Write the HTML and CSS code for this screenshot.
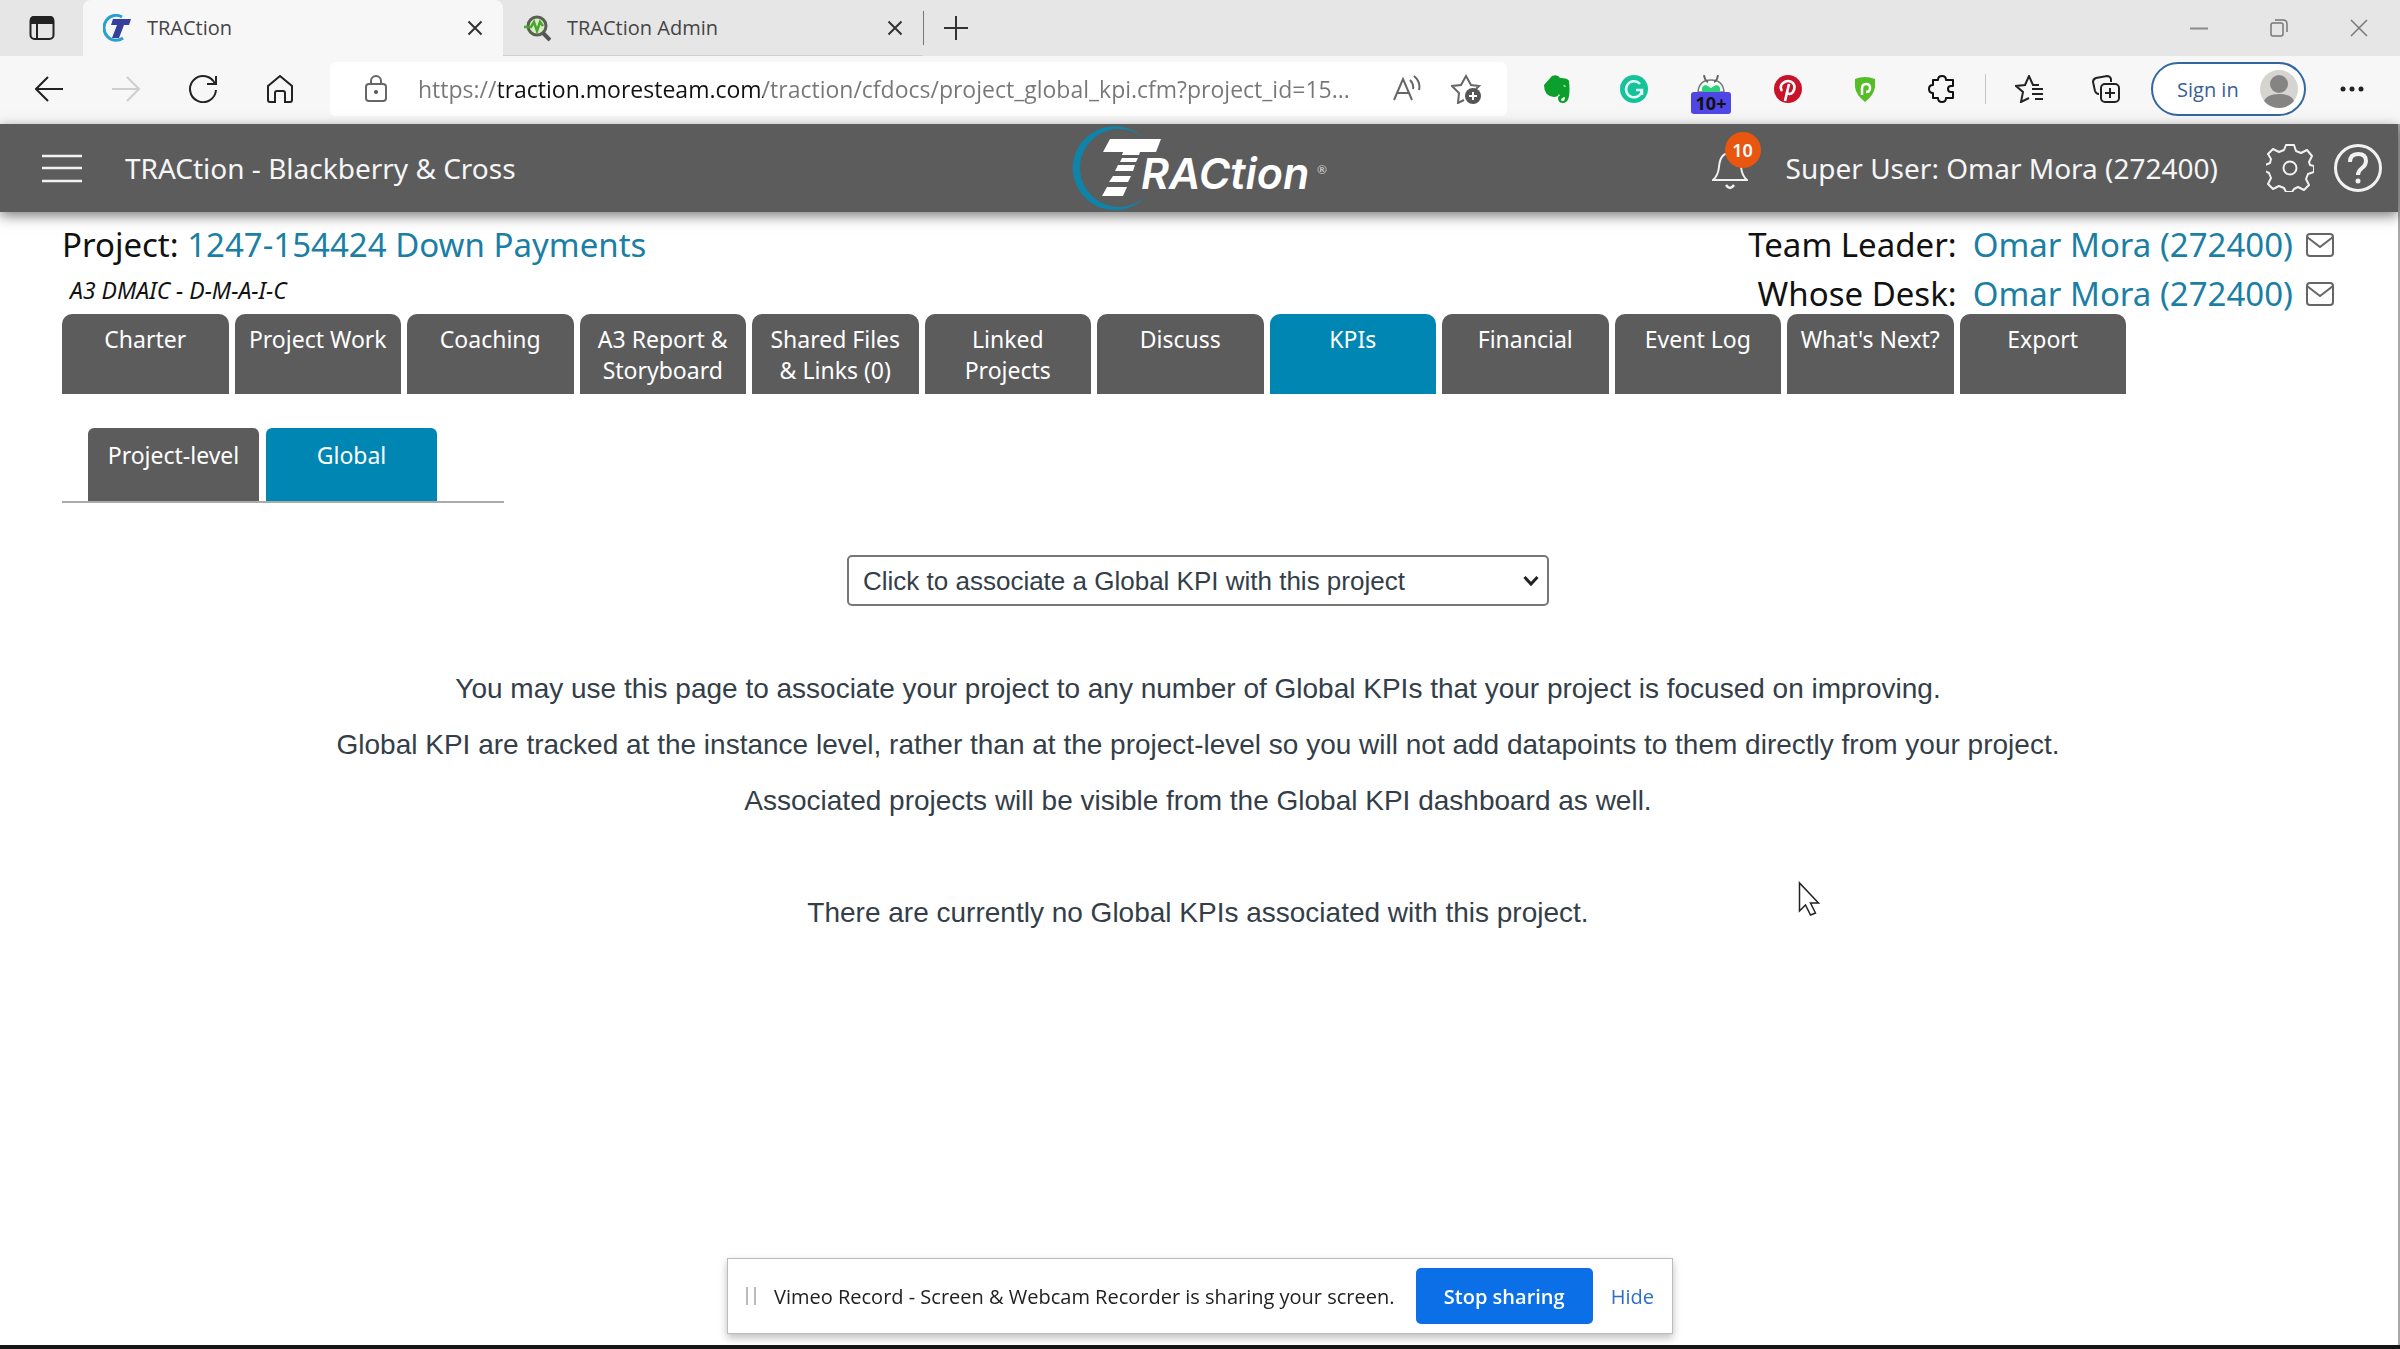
FILE: index.html
```html
<!DOCTYPE html>
<html lang="en">
<head>
<meta charset="utf-8">
<title>TRACtion</title>
<meta name="viewport" content="width=device-width, initial-scale=1">
<link rel="stylesheet" href="styles.css">
</head>
<body>
<div class="tabstrip">
  <button class="icon-btn workspaces" aria-label="Tab actions"><svg width="28" height="28" viewBox="0 0 28 28"><rect x="2.5" y="3" width="23" height="22" rx="4" fill="none" stroke="#222" stroke-width="2"/><path d="M2 10V6q0-4 4-4h16q4 0 4 4v4z" fill="#222"/><path d="M9 10v15" stroke="#222" stroke-width="2"/></svg></button>
  <div class="tab tab-active">
    <svg width="28" height="28" viewBox="0 0 28 28"><path d="M19 3A12 12.500 0 1 0 20 24" fill="none" stroke="#2aa0d0" stroke-width="3"/><path d="M10 5h18l-2 6h-5l-5 13h-7l5-13H8z" fill="#34409c"/></svg>
    <span class="tab-title">TRACtion</span>
    <button class="icon-btn" aria-label="Close tab"><svg width="16" height="16" viewBox="0 0 16 16"><path d="M1.500 1.500l13 13m0-13l-13 13" stroke="#333" stroke-width="2"/></svg></button>
  </div>
  <div class="tab">
    <svg width="28" height="28" viewBox="0 0 28 28"><circle cx="14" cy="12" r="9" fill="#d9ecc8" stroke="#596052" stroke-width="3"/><path d="M20 19l7 7" stroke="#555" stroke-width="4"/><path d="M1 13h7l3-5 3 9 3-9 3 4" fill="none" stroke="#4aa52e" stroke-width="2.500"/></svg>
    <span class="tab-title">TRACtion Admin</span>
    <button class="icon-btn" aria-label="Close tab"><svg width="16" height="16" viewBox="0 0 16 16"><path d="M1.500 1.500l13 13m0-13l-13 13" stroke="#333" stroke-width="2"/></svg></button>
  </div>
  <span class="strip-rule"></span>
  <button class="icon-btn new-tab" aria-label="New tab"><svg width="26" height="26" viewBox="0 0 26 26"><path d="M13 1v24M1 13h24" stroke="#333" stroke-width="2"/></svg></button>
  <div class="window-controls">
    <button class="icon-btn" aria-label="Minimize"><svg width="18" height="18" viewBox="0 0 18 18"><path d="M0 9.500h18" stroke="#8a8a8a" stroke-width="2"/></svg></button>
    <button class="icon-btn" aria-label="Restore"><svg width="18" height="18" viewBox="0 0 18 18"><rect x="1" y="4" width="12" height="13" rx="2" fill="none" stroke="#777" stroke-width="1.500"/><path d="M5 1h8q4 0 4 4v8" fill="none" stroke="#777" stroke-width="1.500"/></svg></button>
    <button class="icon-btn" aria-label="Close window"><svg width="18" height="18" viewBox="0 0 18 18"><path d="M1 1l16 16M17 1L1 17" stroke="#777" stroke-width="1.500"/></svg></button>
  </div>
</div>

<div class="toolbar">
  <div class="tool-group">
    <button class="icon-btn" aria-label="Back"><svg width="28" height="28" viewBox="0 0 28 28"><path d="M28 14H1M13 2L1 14l12 12" fill="none" stroke="#222" stroke-width="2"/></svg></button>
    <button class="icon-btn" aria-label="Forward" disabled><svg width="28" height="28" viewBox="0 0 28 28"><path d="M0 14h27M15 2l12 12-12 12" fill="none" stroke="#cfcfcf" stroke-width="2"/></svg></button>
    <button class="icon-btn" aria-label="Refresh"><svg width="28" height="28" viewBox="0 0 28 28"><path d="M26 9A13 13 0 1 0 27 15M27 1v8h-9" fill="none" stroke="#222" stroke-width="2"/></svg></button>
    <button class="icon-btn" aria-label="Home"><svg width="28" height="28" viewBox="0 0 28 28"><path d="M2 11L14 1l12 10v14q0 2-2 2h-5v-9q0-2-2-2h-6q-2 0-2 2v9H4q-2 0-2-2z" fill="none" stroke="#222" stroke-width="2"/></svg></button>
  </div>
  <div class="address">
    <svg width="24" height="28" viewBox="0 0 24 28"><rect x="2" y="9" width="20" height="17" rx="3" fill="none" stroke="#666" stroke-width="2"/><path d="M7 9V6a5 5 0 0 1 10 0v3" fill="none" stroke="#666" stroke-width="2"/><circle cx="12" cy="17" r="2" fill="#555"/></svg>
    <input class="url" type="text" aria-label="Address" value="https://traction.moresteam.com/traction/cfdocs/project_global_kpi.cfm?project_id=15...">
    <button class="icon-btn" aria-label="Read aloud"><svg width="28" height="28" viewBox="0 0 28 28"><path d="M1 25L10 4l9 21M4 18h12M17 5q4 4 3 9M21 1q7 6 5 14" fill="none" stroke="#666" stroke-width="2"/></svg></button>
    <button class="icon-btn" aria-label="Add to favorites"><svg width="30" height="30" viewBox="0 0 30 30"><path d="M13 26l-6 3 1-10-7-7 9-1 5-9 5 9 8 1-3 3" fill="none" stroke="#666" stroke-width="2"/><circle cx="22" cy="22" r="8" fill="#555"/><path d="M22 18v8m-4-4h8" stroke="#fff" stroke-width="2"/></svg></button>
  </div>
  <div class="tool-group extensions">
    <button class="icon-btn" aria-label="Evernote"><svg width="28" height="28" viewBox="0 0 28 28"><path d="M9 1q6-2 8 2 8 0 9 3 1 9 0 15-1 7-6 7-5 0-5-5 0-3 5-3v3q-2 0-2 2 0 1 2 1 2 0 2-4-4 1-6-3-1 3-5 3Q1 21 1 10z" fill="#0ba02c"/><path d="M20 11q2-2 3 1z" fill="#fff"/></svg></button>
    <button class="icon-btn" aria-label="Grammarly"><svg width="28" height="28" viewBox="0 0 28 28"><circle cx="14" cy="14" r="14" fill="#15c39a"/><path d="M20 9a8 8 0 1 0 2 6h-6m6-1v6" fill="none" stroke="#e8fff8" stroke-width="2.500"/></svg></button>
    <button class="icon-btn ext-count" aria-label="Downloads helper"><svg width="28" height="28" viewBox="0 0 28 28"><path d="M1 17q1-12 13-12t13 12z" fill="#f4fff8" stroke="#777" stroke-width="1.500"/><path d="M7 0q1 6 4 7M21 0q-1 6-4 7" fill="none" stroke="#666" stroke-width="2"/><path d="M5 17q-1-7 4-7l5 3 5-3q5 0 4 7z" fill="#2fcf7c"/></svg><span class="ext-badge">10+</span></button>
    <button class="icon-btn" aria-label="Pinterest"><svg width="28" height="28" viewBox="0 0 28 28"><circle cx="14" cy="14" r="14" fill="#c8142a"/><path d="M8 16q-3-5 1-8 5-4 10 0 3 4 0 9-3 4-7 0M15 9l-4 17" fill="none" stroke="#fff" stroke-width="2.600"/></svg></button>
    <button class="icon-btn" aria-label="Privacy shield"><svg width="28" height="28" viewBox="0 0 28 28"><path d="M4 4q10-4 20 0v8q-1 8-10 15Q5 20 4 12z" fill="#55bd26"/><path d="M11 20v-6q0-5 4-5t4 4-4 4" fill="none" stroke="#fff" stroke-width="2.500"/></svg></button>
    <button class="icon-btn" aria-label="Extensions"><svg width="28" height="28" viewBox="0 0 28 28"><path d="M5 5h5q0-4 4-4t4 4h7v6h-2q-3 0-3 3t3 3h2v6h-7q0 4-4 4t-4-4H5v-5q-4 0-4-4t4-4z" fill="none" stroke="#111" stroke-width="2" stroke-linejoin="round"/></svg></button>
    <span class="tool-rule"></span>
    <button class="icon-btn" aria-label="Favorites"><svg width="28" height="28" viewBox="0 0 28 28"><path d="M14 23l-8 4 2-10-7-6 9-1 4-9 4 9h6M17 14h11M17 19h11M20 24h8" fill="none" stroke="#222" stroke-width="2"/></svg></button>
    <button class="icon-btn" aria-label="Collections"><svg width="28" height="28" viewBox="0 0 28 28"><path d="M7 19Q4 19 3 16L1 7q0-3 3-4l11-2q3 0 4 3v3" fill="none" stroke="#222" stroke-width="2"/><rect x="9" y="9" width="18" height="18" rx="4" fill="none" stroke="#222" stroke-width="2"/><path d="M18 13v10m-5-5h10" stroke="#222" stroke-width="2"/></svg></button>
  </div>
  <button class="sign-in"><span>Sign in</span><svg width="38" height="38" viewBox="0 0 38 38"><circle cx="19" cy="19" r="19" fill="#d5d4d1"/><circle cx="19" cy="14" r="9" fill="#858483"/><path d="M4 31q3-7 15-7t15 7q-6 7-15 7T4 31z" fill="#858483"/></svg></button>
  <button class="icon-btn more" aria-label="Settings and more"><svg width="24" height="24" viewBox="0 0 24 24"><circle cx="3" cy="12" r="2.500" fill="#222"/><circle cx="12" cy="12" r="2.500" fill="#222"/><circle cx="21" cy="12" r="2.500" fill="#222"/></svg></button>
</div>

<div class="page">
  <header class="app-header">
    <div class="header-left">
      <button class="icon-btn" aria-label="Menu"><svg width="40" height="30" viewBox="0 0 40 30"><path d="M0 3h40M0 15h40M0 28h40" stroke="#f2f2f2" stroke-width="2.500"/></svg></button>
      <span class="app-title">TRACtion - Blackberry &amp; Cross</span>
    </div>
    <a class="logo" href="#" aria-label="TRACtion home">
      <svg width="258" height="88" viewBox="0 0 258 88"><path d="M74 14A42 42 0 1 0 77 71A39 39 0 1 1 74 14z" fill="#0f83a8"/><path d="M40 15h51l-5 13H70l-1 3H52l1-3H33zM52 34h16l-2 4H50zM48 41h17l-2 6H45zM43 52h18l-3 6H39zM37 63h20l-4 9H32z" fill="#fff"/><text x="71" y="65" class="logo-text">RACtion</text><text x="247" y="50" class="logo-mark">®</text></svg>
    </a>
    <div class="header-right">
      <button class="icon-btn bell" aria-label="Notifications"><svg width="36" height="44" viewBox="0 0 36 44"><path d="M1 34h34q-5-4-6-13Q28 7 18 7T7 21Q6 30 1 34z" fill="none" stroke="#f2f2f2" stroke-width="2"/><path d="M14 39q4 6 8 0" fill="none" stroke="#f2f2f2" stroke-width="2.500"/></svg><span class="bell-badge">10</span></button>
      <span class="user-name">Super User: Omar Mora (272400)</span>
      <button class="icon-btn" aria-label="Settings"><svg width="48" height="48" viewBox="0 0 48 48"><path d="M20 1h8l2 6 5 2 6-3 5 6-3 6 1 3 4 1v6l-6 2-2 5 3 6-5 5-6-3-4 2-2 3h-6l-2-4-5-2-6 3-5-5 3-6-2-5-4-2v-6l5-2 1-4-3-5 5-5 6 3 5-2z" fill="none" stroke="#f2f2f2" stroke-width="2" stroke-linejoin="round"/><circle cx="24" cy="24" r="6.500" fill="none" stroke="#f2f2f2" stroke-width="2"/></svg></button>
      <button class="icon-btn" aria-label="Help"><svg width="48" height="48" viewBox="0 0 48 48"><circle cx="24" cy="24" r="22.500" fill="none" stroke="#f2f2f2" stroke-width="3"/><path d="M16 18q0-8 8-8t8 7q0 4-4 7t-4 7" fill="none" stroke="#f2f2f2" stroke-width="4"/><circle cx="24" cy="37" r="2.500" fill="#f2f2f2"/></svg></button>
    </div>
  </header>

  <main class="content">
    <div class="project-head">
      <div>
        <h1 class="project-name">Project: <a href="#">1247-154424 Down Payments</a></h1>
        <p class="project-type">A3 DMAIC - D-M-A-I-C</p>
      </div>
      <div class="people">
        <div class="person"><span>Team Leader:</span><a href="#">Omar Mora (272400)</a><a class="mail" href="#" aria-label="Email team leader"><svg width="28" height="24" viewBox="0 0 28 24"><rect x="1" y="1" width="26" height="22" rx="3" fill="none" stroke="#666" stroke-width="2"/><path d="M1 4l13 10L27 4" fill="none" stroke="#666" stroke-width="2"/></svg></a></div>
        <div class="person"><span>Whose Desk:</span><a href="#">Omar Mora (272400)</a><a class="mail" href="#" aria-label="Email desk owner"><svg width="28" height="24" viewBox="0 0 28 24"><rect x="1" y="1" width="26" height="22" rx="3" fill="none" stroke="#666" stroke-width="2"/><path d="M1 4l13 10L27 4" fill="none" stroke="#666" stroke-width="2"/></svg></a></div>
      </div>
    </div>

    <nav class="main-tabs">
      <a href="#">Charter</a>
      <a href="#">Project Work</a>
      <a href="#">Coaching</a>
      <a href="#">A3 Report &amp;<br>Storyboard</a>
      <a href="#">Shared Files<br>&amp; Links (0)</a>
      <a href="#">Linked<br>Projects</a>
      <a href="#">Discuss</a>
      <a href="#" class="current">KPIs</a>
      <a href="#">Financial</a>
      <a href="#">Event Log</a>
      <a href="#">What's Next?</a>
      <a href="#">Export</a>
    </nav>

    <nav class="sub-tabs">
      <a href="#">Project-level</a>
      <a href="#" class="current">Global</a>
    </nav>

    <section class="kpi">
      <div class="select-wrap">
        <select aria-label="Global KPI"><option>Click to associate a Global KPI with this project</option></select>
        <svg class="chevron" width="16" height="12" viewBox="0 0 16 12"><path d="M1.500 2L8 9l6.500-7" fill="none" stroke="#222" stroke-width="3"/></svg>
      </div>
      <p>You may use this page to associate your project to any number of Global KPIs that your project is focused on improving.</p>
      <p>Global KPI are tracked at the instance level, rather than at the project-level so you will not add datapoints to them directly from your project.</p>
      <p>Associated projects will be visible from the Global KPI dashboard as well.</p>
      <p class="empty-note">There are currently no Global KPIs associated with this project.</p>
    </section>
  </main>
</div>
<div class="taskbar-edge"></div>

<div class="share-bar">
  <span class="grip"></span>
  <span class="share-text">Vimeo Record - Screen &amp; Webcam Recorder is sharing your screen.</span>
  <button class="stop">Stop sharing</button>
  <a href="#">Hide</a>
</div>
<svg class="pointer" width="22" height="36" viewBox="0 0 22 36"><path d="M1.500 2v28l6-6 5 10 5-2-5-10h8z" fill="#fff" stroke="#222" stroke-width="1.500"/></svg>
</body>
</html>
```
FILE: styles.css
```css
* { box-sizing: border-box; }

body {
  margin: 0;
  min-height: 100vh;
  display: flex;
  flex-direction: column;
  background: #fff;
  color: #111;
  font-family: "Noto Sans", "Open Sans", sans-serif;
}

svg { display: block; flex: none; }
a { color: #1b7fa5; text-decoration: none; }
p, h1 { margin: 0; font-weight: 400; }

.icon-btn {
  display: flex;
  align-items: center;
  justify-content: center;
  flex: none;
  padding: 0;
  border: 0;
  background: none;
}

/* Browser tab strip */
.tabstrip {
  display: flex;
  align-items: center;
  height: 56px;
  background: #e6e6e6;
  font-family: "Open Sans", sans-serif;
  font-size: 20px;
  color: #444;
}
.workspaces { width: 83px; }
.tab {
  display: flex;
  align-items: center;
  width: 420px;
  height: 56px;
  padding: 0 20px;
  gap: 16px;
  border-bottom: 1px solid #d0d0d0;
}
.tab-active {
  background: #f7f7f7;
  border-bottom-color: #f7f7f7;
  border-radius: 8px 8px 0 0;
}
.tab-title { flex: 1; }
.strip-rule { width: 1px; height: 34px; background: #777; }
.new-tab { width: 64px; }
.window-controls { display: flex; gap: 62px; margin-left: auto; padding-right: 32px; }

/* Browser toolbar */
.toolbar {
  display: flex;
  align-items: center;
  height: 68px;
  padding: 0 36px 2px 35px;
  background: #f7f7f7;
}
.tool-group { display: flex; align-items: center; gap: 49px; }
.address {
  display: flex;
  align-items: center;
  flex: 1;
  height: 54px;
  margin: 0 36px;
  padding: 0 26px 0 34px;
  gap: 30px;
  background: #fff;
  border-radius: 6px;
}
.url {
  flex: 1;
  min-width: 0;
  height: 40px;
  margin-right: -16px;
  padding: 0;
  border: 0;
  outline: 0;
  font: 23px "Open Sans", sans-serif;
  color: transparent;
  background: linear-gradient(to right, #777 81px, #111 81px 345px, #777 345px);
  background-clip: text;
}
.ext-count { position: relative; }
.ext-badge {
  position: absolute;
  top: 17px;
  left: -6px;
  width: 40px;
  border-radius: 3px;
  background: #5046e5;
  color: #111;
  font: 700 18px/22px "Open Sans", sans-serif;
}
.tool-rule { width: 1px; height: 30px; margin: 0 -20px; background: #c4c4c4; }
.sign-in {
  display: flex;
  align-items: center;
  justify-content: space-between;
  width: 155px;
  height: 54px;
  margin: 0 34px 0 31px;
  padding: 0 6px 0 24px;
  border: 2px solid #33679f;
  border-radius: 27px;
  background: #fff;
  color: #3b5f98;
  font: 20px "Open Sans", sans-serif;
}

/* Application */
.page { flex: 1; border-right: 2px solid #a8a8a8; }
.app-header {
  display: grid;
  grid-template-columns: 1fr auto 1fr;
  align-items: center;
  height: 88px;
  padding: 0 16px 0 42px;
  background: #5c5c5c;
  color: #f6f6f6;
  font-size: 28px;
  box-shadow: 0 4px 12px rgba(0, 0, 0, .5);
}
.header-left { display: flex; align-items: center; gap: 43px; }
.logo { margin-right: 26px; }
.header-right { display: flex; align-items: center; justify-content: flex-end; gap: 20px; }
.logo-text { font: italic 600 43px Inter, sans-serif; fill: #fff; }
.logo-mark { font: 12px Lato, sans-serif; fill: #ddd; }
.bell { position: relative; margin-right: 18px; }
.user-name { margin-right: 28px; }
.bell-badge {
  position: absolute;
  top: -14px;
  left: 13px;
  width: 36px;
  border-radius: 18px;
  background: #e8560f;
  color: #fff;
  font: 600 18px/36px "Noto Sans", sans-serif;
}

.content { padding: 8px 64px 0 62px; }
.project-head { display: flex; justify-content: space-between; height: 94px; }
.project-name { font-size: 33px; line-height: 49px; }
.project-type { padding-left: 8px; font-size: 23px; line-height: 42px; font-style: italic; }
.person {
  display: flex;
  align-items: center;
  justify-content: flex-end;
  font-size: 33px;
  line-height: 49px;
}
.person span { margin-right: 16px; }
.mail { margin-left: 13px; }

.main-tabs { display: flex; gap: 6px; max-width: 2064px; }
.main-tabs a, .sub-tabs a {
  background: #5c5c5c;
  color: #fff;
  font-size: 23px;
  line-height: 31px;
  text-align: center;
}
.main-tabs a { flex: 1 1 0; height: 80px; padding-top: 10px; border-radius: 10px 10px 0 0; }
.main-tabs .current, .sub-tabs .current { background: #0086b3; }
.sub-tabs {
  display: flex;
  gap: 7px;
  width: 442px;
  margin-top: 34px;
  padding-left: 26px;
  border-bottom: 2px solid #aaa;
}
.sub-tabs a { width: 171px; height: 73px; padding-top: 12px; border-radius: 6px 6px 0 0; }

.kpi {
  display: flex;
  flex-direction: column;
  align-items: center;
  padding-top: 52px;
  font-family: "Liberation Sans", Arial, sans-serif;
  font-size: 28px;
  line-height: 56px;
  color: #333e48;
  text-align: center;
}
.select-wrap { position: relative; margin-bottom: 55px; }
.select-wrap select {
  display: block;
  width: 702px;
  height: 51px;
  padding: 0 14px;
  border: 2px solid #777;
  border-radius: 5px;
  appearance: none;
  background: #fff;
  color: #333e48;
  font: 26px "Liberation Sans", Arial, sans-serif;
}
.chevron { position: absolute; right: 10px; top: 20px; pointer-events: none; }
.empty-note { margin-top: 56px; }

.taskbar-edge { height: 4px; background: #151515; }

/* Floating screen-share notice */
.share-bar {
  position: fixed;
  bottom: 15px;
  left: 50%;
  transform: translateX(-50%);
  display: flex;
  align-items: center;
  width: 946px;
  height: 76px;
  padding: 0 18px;
  background: #fff;
  border: 1px solid #bbb;
  box-shadow: 0 4px 8px rgba(0, 0, 0, .25);
  color: #222;
  font: 20px "Open Sans", sans-serif;
}
.grip { width: 10px; height: 18px; margin-right: 18px; border: 2px solid #bbb; border-width: 0 2px; }
.share-text { flex: 1; white-space: nowrap; }
.stop {
  width: 177px;
  height: 56px;
  margin-right: 18px;
  border: 0;
  border-radius: 5px;
  background: #0b6fe8;
  color: #fff;
  font: 600 20px "Open Sans", sans-serif;
}
.share-bar a { color: #2e6fc4; }

.pointer { position: fixed; left: 1798px; top: 881px; }
```
